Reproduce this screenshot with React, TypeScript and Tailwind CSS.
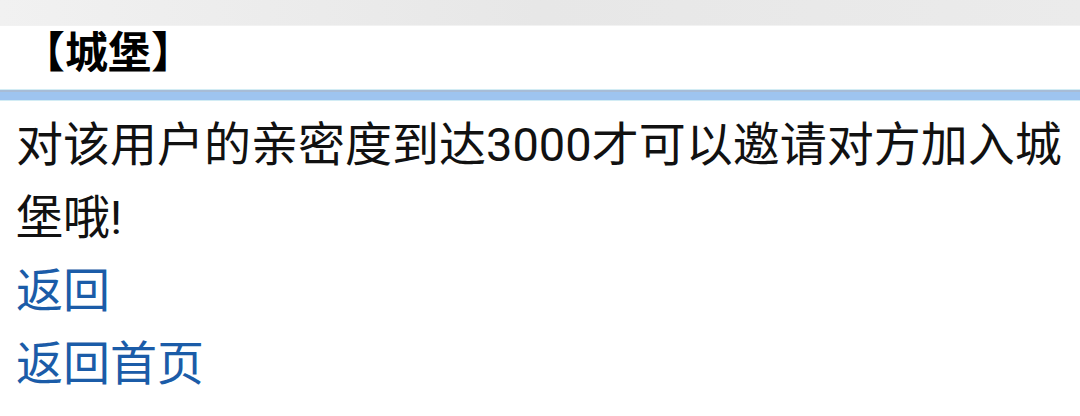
const font = { fontFamily: '"Roboto", "Noto Sans CJK SC", sans-serif' };

export default function App() {
  return (
    <div className="min-h-[416px] w-[1080px] overflow-hidden bg-white text-[#111]" style={font}>
      <div className="h-[26px] border-b border-[#f2f2f2] bg-gradient-to-r from-[#f1f1f1] via-[#e7e7e7] to-[#ebebeb]" />
      <div className="pl-[22px] text-[43px] font-bold leading-[54px] text-black">【城堡】</div>
      <div className="mt-[9px] h-[12px] border-y border-[#d2ecf4] bg-[#9ec4ef]">
        <div className="h-[2px] bg-[#a7bcd6]" />
      </div>
      <div className="mt-[7px] px-4 text-[47px] leading-[73px]">
        <p>对该用户的亲密度到达3000才可以邀请对方加入城堡哦!</p>
        <div>
          <a href="#" className="text-[#1b5ca8]">返回</a>
        </div>
        <div>
          <a href="#" className="text-[#1b5ca8]">返回首页</a>
        </div>
      </div>
    </div>
  );
}
